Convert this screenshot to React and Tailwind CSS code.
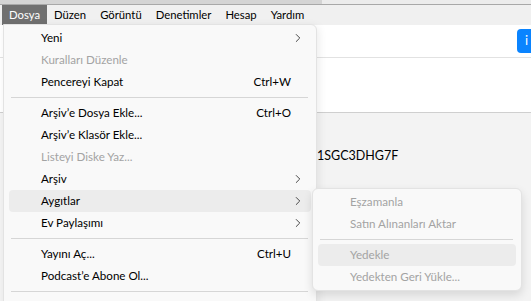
import { ChevronRight } from 'lucide-react';

const menuBar = ['Dosya', 'Düzen', 'Görüntü', 'Denetimler', 'Hesap', 'Yardım'];

const fileMenu = [
  { label: 'Yeni', sub: true },
  { label: 'Kuralları Düzenle', disabled: true },
  { label: 'Pencereyi Kapat', shortcut: 'Ctrl+W' },
  { sep: true },
  { label: 'Arşiv’e Dosya Ekle...', shortcut: 'Ctrl+O' },
  { label: 'Arşiv’e Klasör Ekle...' },
  { label: 'Listeyi Diske Yaz...', disabled: true },
  { label: 'Arşiv', sub: true },
  { label: 'Aygıtlar', sub: true, active: true },
  { label: 'Ev Paylaşımı', sub: true },
  { sep: true },
  { label: 'Yayını Aç...', shortcut: 'Ctrl+U' },
  { label: 'Podcast’e Abone Ol...' },
  { sep: true },
];

const deviceMenu = [
  { label: 'Eşzamanla' },
  { label: 'Satın Alınanları Aktar' },
  { sep: true },
  { label: 'Yedekle', active: true },
  { label: 'Yedekten Geri Yükle...' },
];

const MenuRow = ({ item }) => {
  if (item.sep) return <div className="ml-[7px] mr-[8px] my-[4px] h-px bg-[#d6d6d6]" />;
  return (
    <div
      className={`mx-[5px] flex h-[22px] items-center rounded-[4px] pl-[32px] pr-[6px] ${
        item.active ? 'bg-[#ececec]' : ''
      } ${item.disabled ? 'text-[#a3a3a3]' : 'text-black'}`}
    >
      <span className="flex-1">{item.label}</span>
      {item.shortcut && <span className="mr-[14px]">{item.shortcut}</span>}
      {item.sub && <ChevronRight size={14} strokeWidth={1.4} className="text-[#222]" />}
    </div>
  );
};

export default function App() {
  return (
    <div
      className="relative h-[301px] w-[531px] overflow-hidden bg-[#f3f3f3] text-[11.6px]"
      style={{ fontFamily: 'Lato, "Noto Sans", sans-serif' }}
    >
      {/* window top edge */}
      <div className="flex h-[4px]">
        <div className="w-[322px] bg-[#d4d4d4]" />
        <div className="flex-1 bg-[#ececec]" />
      </div>
      <div className="h-px bg-[#a8a8a8]" />

      {/* menu bar */}
      <div className="flex h-[20px] items-center bg-[#f0f0f0] pl-[2px] text-[11.3px]">
        {menuBar.map((m, i) => (
          <div
            key={m}
            className={`flex h-full items-center px-[7px] ${
              i === 0 ? 'bg-[#707070] text-white' : 'text-black'
            }`}
          >
            {m}
          </div>
        ))}
      </div>

      {/* page behind */}
      <div className="flex h-[33px] items-center justify-end border-b border-[#e2e2e2] bg-white">
        <div className="mr-[-40px] flex h-[24px] w-[54px] items-center rounded-[4px] bg-[#0a84ff] pl-[8px] text-[13px] text-white">
          i
        </div>
      </div>
      <div className="h-[55px] border-b border-[#cfcfcf] bg-white" />
      <div className="pl-[317px] pt-[34px] text-[12.5px] text-black">1SGC3DHG7F</div>

      {/* Dosya menu */}
      <div className="absolute left-[3px] top-[24px] h-[290px] w-[314px] rounded-tr-[6px] border border-[#e3e3e3] bg-[#f9f9f9] pt-[2px] shadow-[2px_2px_8px_rgba(0,0,0,0.08)]">
        {fileMenu.map((item, i) => (
          <MenuRow key={i} item={item} />
        ))}
      </div>

      {/* Aygıtlar submenu */}
      <div className="absolute left-[312px] top-[188px] w-[210px] rounded-[6px] border border-[#e3e3e3] bg-[#f9f9f9] py-[2px] shadow-[0_4px_10px_rgba(0,0,0,0.12)]">
        {deviceMenu.map((item, i) => (
          <MenuRow key={i} item={{ ...item, disabled: true }} />
        ))}
      </div>
    </div>
  );
}
